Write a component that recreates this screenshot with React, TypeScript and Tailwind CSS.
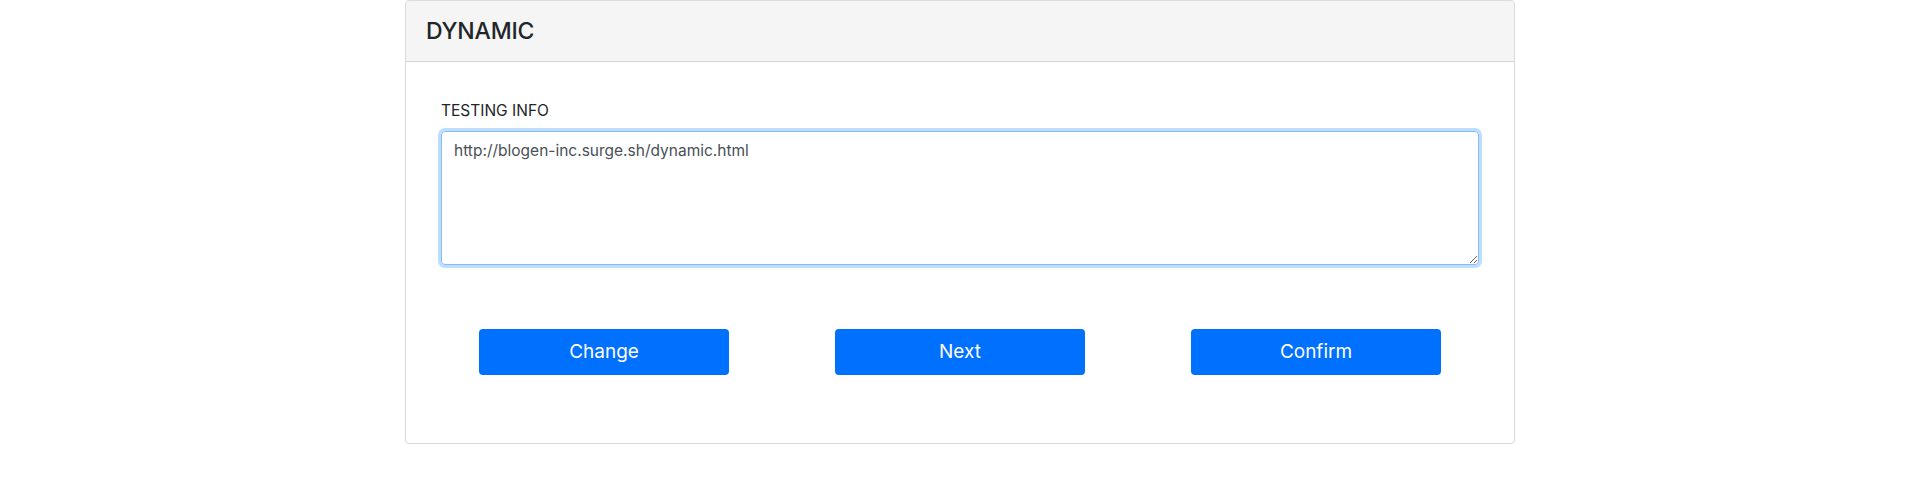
import React from "react";

export default function App() {
  const font = { fontFamily: "Inter, 'Noto Sans', sans-serif" };
  return (
    <div className="w-full bg-white" style={font}>
      <div className="mx-auto w-[1110px] rounded-[4px] border border-[#dadada] bg-white">
        <div className="flex h-[61px] items-center border-b border-[#d6d6d6] bg-[#f5f5f5] px-5 rounded-t-[4px]">
          <h4 className="text-[23px] font-medium leading-none text-[#212529] tracking-[-0.2px]">DYNAMIC</h4>
        </div>
        <div className="px-5 pt-[37px] pb-[68px]">
          <div className="px-[15px]">
            <label className="mb-[8px] block text-[15.5px] leading-[24px] text-[#212529]">TESTING INFO</label>
            <textarea
              className="block h-[134px] w-full rounded-[4px] border border-[#80bdff] px-3 pt-[7px] pb-[6px] text-[15.5px] leading-[24px] text-[#495057] shadow-[0_0_0_3px_rgba(0,123,255,0.25)] outline-none"
              defaultValue="http://blogen-inc.surge.sh/dynamic.html"
              style={font}
            />
          </div>
          <div className="mt-[64px] grid grid-cols-3">
            {["Change", "Next", "Confirm"].map((t) => (
              <div key={t} className="flex justify-center">
                <button className="h-[46px] w-[250px] rounded-[4px] bg-[#0070ff] text-[19px] text-white" style={font}>
                  {t}
                </button>
              </div>
            ))}
          </div>
        </div>
      </div>
    </div>
  );
}
